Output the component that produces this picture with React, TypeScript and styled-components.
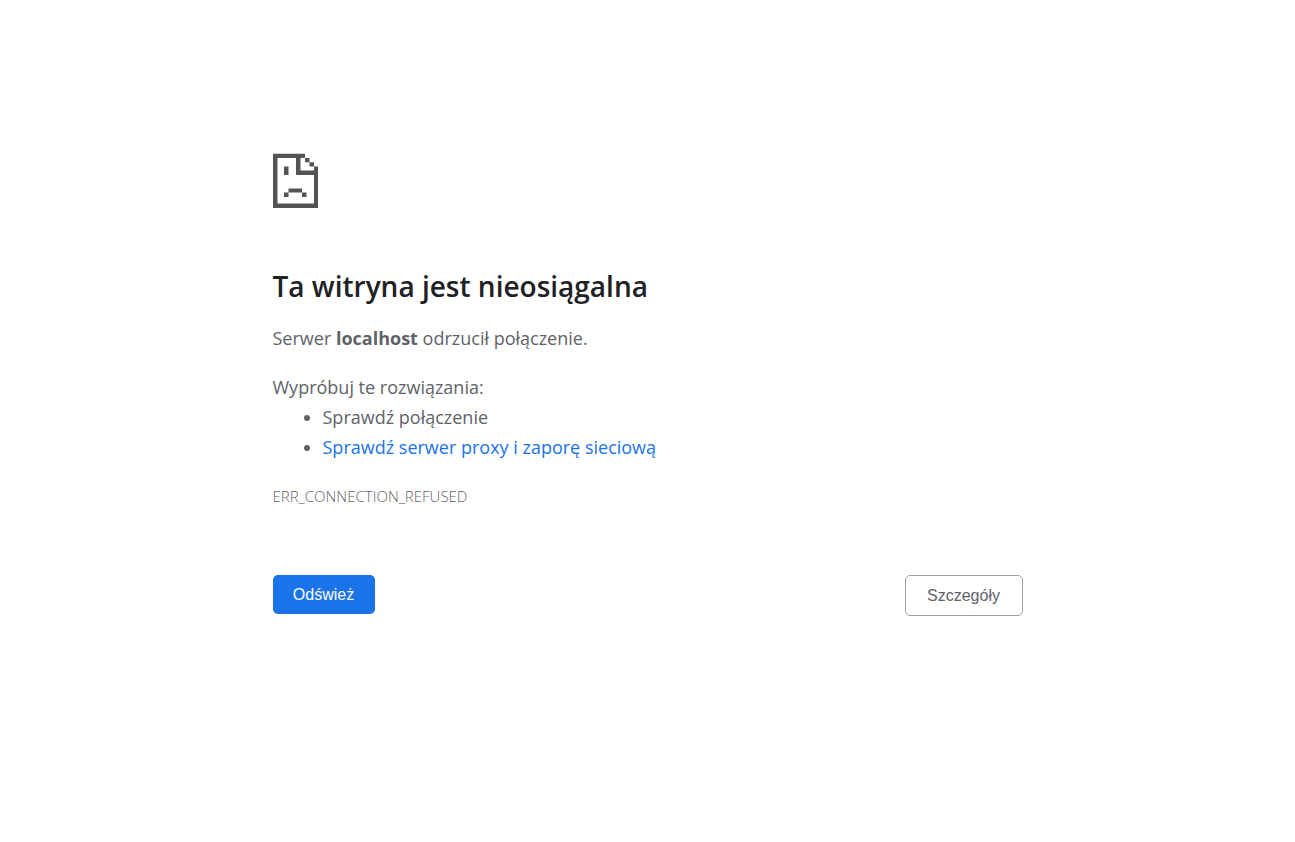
import React from "react";
import styled, { createGlobalStyle, css } from "styled-components";

const GlobalStyle = createGlobalStyle`
  *, *::before, *::after {
    box-sizing: border-box;
  }

  body {
    margin: 0;
    background: #fff;
    color: #5f6368;
    font-family: "Segoe UI", "Open Sans", "Noto Sans", sans-serif;
    font-size: 18px;
    font-weight: 400;
    line-height: 30px;
  }
`;

const Page = styled.main`
  max-width: 798px;
  margin: 0 auto;
  padding: 153px 24px 48px;
`;

const SadFile = styled.svg`
  display: block;
  width: 45px;
  height: 55px;
  fill: #535353;
`;

const Title = styled.h1`
  margin: 58px 0 17px;
  color: #202124;
  font-size: 28px;
  font-weight: 600;
  line-height: 40px;
`;

const Paragraph = styled.p`
  margin: 0;
`;

const Suggestions = styled.section`
  margin-top: 19px;
`;

const SuggestionList = styled.ul`
  margin: 0;
  padding: 0 0 0 50px;
`;

const Link = styled.a`
  color: #1a73e8;
  text-decoration: none;
`;

const ErrorCode = styled.p`
  margin: 19px 0 0;
  font-size: 15px;
  font-weight: 300;
`;

const Actions = styled.div`
  display: flex;
  flex-wrap: wrap;
  align-items: flex-start;
  justify-content: space-between;
  gap: 16px;
  margin-top: 64px;
`;

const Button = styled.button<{ $primary?: boolean }>`
  min-width: 118px;
  padding: 10px 20px;
  border: 1px solid #9aa0a6;
  border-radius: 5px;
  background: #fff;
  color: #5f6368;
  font-family: Arial, "Liberation Sans", sans-serif;
  font-size: 16px;
  line-height: 19px;
  cursor: pointer;

  ${({ $primary }) =>
    $primary &&
    css`
      min-width: 102px;
      border: 0;
      background: #1a73e8;
      color: #fff;
    `}
`;

export default function App() {
  return (
    <>
      <GlobalStyle />
      <Page>
        <SadFile viewBox="0 0 45 55" aria-hidden="true">
          <path
            fillRule="evenodd"
            d="M0 .7H32V5H27.500V17.500H41V22H23V5H4.500V50.500H41V13.500H45V55H0Z"
          />
          <path d="M32 5h4.500v4.300H32zM36.500 9.300H41v4.200h-4.500zM41 17.500h1V22h-1z" />
          <path d="M11 13.500h4.500V22H11zM15.500 35.500h13.500V39.500H15.500zM11 39.500h4.500V44H11zM29 39.500h4.500V44H29z" />
        </SadFile>

        <Title>Ta witryna jest nieosiągalna</Title>
        <Paragraph>
          Serwer <strong>localhost</strong> odrzucił połączenie.
        </Paragraph>

        <Suggestions>
          <Paragraph>Wypróbuj te rozwiązania:</Paragraph>
          <SuggestionList>
            <li>Sprawdź połączenie</li>
            <li>
              <Link href="#buttons">Sprawdź serwer proxy i zaporę sieciową</Link>
            </li>
          </SuggestionList>
        </Suggestions>

        <ErrorCode>ERR_CONNECTION_REFUSED</ErrorCode>

        <Actions id="buttons">
          <Button type="button" $primary>
            Odśwież
          </Button>
          <Button type="button">Szczegóły</Button>
        </Actions>
      </Page>
    </>
  );
}
